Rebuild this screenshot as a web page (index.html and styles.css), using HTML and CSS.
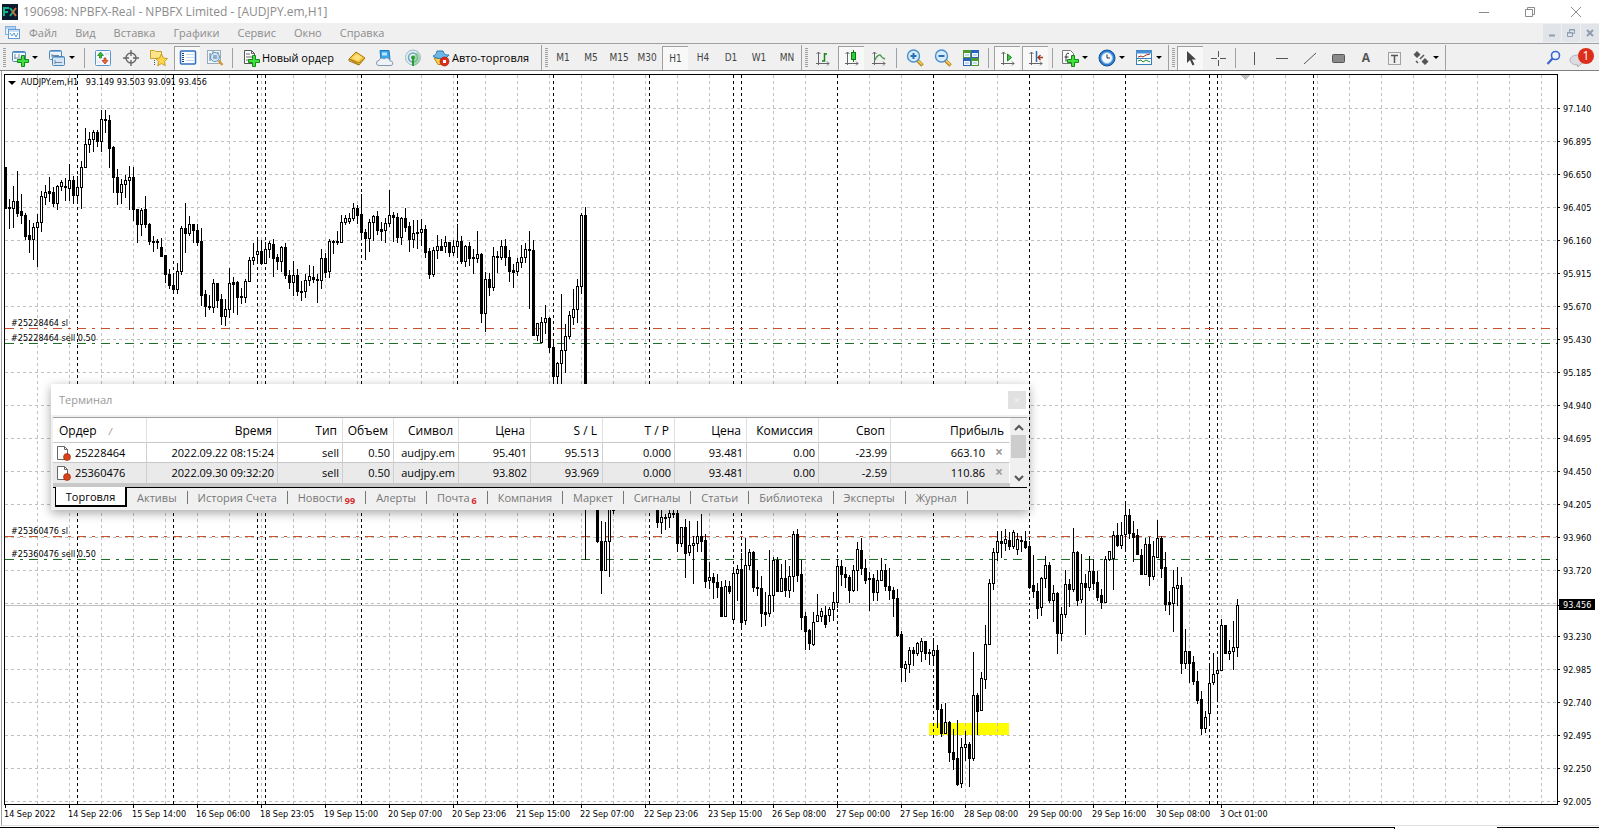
FILE: index.html
```html
<!DOCTYPE html>
<html lang="ru">
<head>
  <meta charset="UTF-8">
  <meta name="viewport" content="width=device-width, initial-scale=1.0">
  <title>190698: NPBFX-Real - NPBFX Limited - [AUDJPY.em,H1]</title>
  <link rel="stylesheet" href="styles.css">
</head>
<body>
  <header class="titlebar">
    <svg class="app-icon" width="16" height="16" viewBox="0 0 16 16"><rect width="16" height="16" fill="#0b1a2c"/><path d="M2 12V4h5M2 8h4" stroke="#12b48c" stroke-width="2" fill="none"/><path d="M8 4l3 4-3 4" stroke="#12b48c" stroke-width="2" fill="none"/><path d="M14 4l-3 4 3 4" stroke="#c8703c" stroke-width="2" fill="none"/></svg>
    <span class="title">190698: NPBFX-Real - NPBFX Limited - [AUDJPY.em,H1]</span>
    <div class="win-buttons">
      <button aria-label="Свернуть"><svg width="12" height="12"><path d="M1 6.500h10" stroke="#8a8a8a" fill="none"/></svg></button>
      <button aria-label="Развернуть"><svg width="12" height="12"><path d="M1.500 3.500h7v7h-7zM3.500 3V1.500h7v7H9" stroke="#8a8a8a" fill="none"/></svg></button>
      <button aria-label="Закрыть"><svg width="12" height="12"><path d="M1 1l10 10M11 1L1 11" stroke="#8a8a8a" fill="none"/></svg></button>
    </div>
  </header>

  <nav class="menubar">
    <svg class="menu-icon" width="15" height="15" viewBox="0 0 15 15"><rect x=".5" y="1.500" width="10" height="8" fill="#eef5fc" stroke="#7fb0e0"/><path d="M1 3h9" stroke="#7fb0e0"/><rect x="3.500" y="4.500" width="11" height="9" fill="#fff" stroke="#5b9bd8"/><path d="M4 6h10" stroke="#9cc4ea"/><path d="M5 8l2 3 2-3 2 4 2-4" stroke="#5b9bd8" fill="none"/></svg>
    <a href="#">Файл</a>
    <a href="#">Вид</a>
    <a href="#">Вставка</a>
    <a href="#">Графики</a>
    <a href="#">Сервис</a>
    <a href="#">Окно</a>
    <a href="#">Справка</a>
    <div class="mdi-buttons">
      <button aria-label="Свернуть окно"><svg width="10" height="10"><path d="M2 7.500h6" stroke="#8f9db0" stroke-width="2"/></svg></button>
      <button aria-label="Восстановить окно"><svg width="10" height="10"><path d="M1.500 4.500h5v4h-5zM3.500 4V1.500h5v4H7M1 5h6M3 2h6" stroke="#8f9db0" fill="none"/></svg></button>
      <button aria-label="Закрыть окно"><svg width="10" height="10"><path d="M2 2l6 6M8 2L2 8" stroke="#8f9db0" stroke-width="2"/></svg></button>
    </div>
  </nav>

  <div class="toolbar">
    <div class="tool-group">
      <button class="drop" aria-label="Новый график"><svg width="18" height="18" viewBox="0 0 18 18"><rect x="1.500" y="2.500" width="13" height="10" rx="1" fill="#f4f9fd" stroke="#4b86b8"/><path d="M1 3.500h14" stroke="#5c9ad0"/><path d="M4 5v5M3 9h7M8 5v3" stroke="#7a8fa5"/><path d="M10.500 6.500h3v4h4v3h-4v4h-3v-4h-4v-3h4z" fill="#3fe03f" stroke="#148a14"/></svg></button>
      <button class="drop" aria-label="Профили"><svg width="18" height="18" viewBox="0 0 18 18"><rect x="1.500" y="1.500" width="12" height="9" rx="1" fill="#eaf3fb" stroke="#4b86b8"/><rect x="4.500" y="7.500" width="12" height="9" rx="1" fill="#d5e7f6" stroke="#4b86b8"/><path d="M2 2.500h11M5 8.500h11" stroke="#7bb0dc"/><path d="M4 5v3M4 6.500h7M7 11v4M7 13.500h7" stroke="#6f88a0"/></svg></button>
      <span class="sep"></span>
      <button aria-label="Обзор рынка"><svg width="18" height="18" viewBox="0 0 18 18"><rect x="1.500" y="1.500" width="15" height="15" rx="1" fill="#f3f9fe" stroke="#5c96c6"/><path d="M4 5h3M11 5h4M3 13h3" stroke="#c4d9ea"/><path d="M6.500 3l3 3.500h-2V9h-2V6.500h-2z" fill="#35b535" stroke="#178217" stroke-width=".7"/><path d="M11 15l-3-3.500h2V9h2v2.500h2z" fill="#f26a3a" stroke="#b33512" stroke-width=".7"/></svg></button>
      <button aria-label="Окно данных"><svg width="18" height="18" viewBox="0 0 18 18"><circle cx="9" cy="9" r="5" fill="none" stroke="#666" stroke-width="1.400"/><path d="M9 1v6M9 11v6M1 9h6M11 9h6" stroke="#666" stroke-width="1.400"/></svg></button>
      <button aria-label="Навигатор"><svg width="18" height="18" viewBox="0 0 18 18"><path d="M.5 1.500h4l1 1h6v7h-11z" fill="#fbe48a" stroke="#c9a028"/><path d="M4.500 11v6" stroke="#555" stroke-dasharray="1 1"/><path d="M11.500 5l1.900 4 4.100.5-3 2.900.8 4.300-3.800-2.100-3.800 2.100.8-4.300-3-2.900 4.100-.5z" fill="#ffd84a" stroke="#b98a14" stroke-width=".8"/></svg></button>
      <button class="on" aria-label="Терминал"><svg width="18" height="18" viewBox="0 0 18 18"><rect x="1.500" y="2" width="15" height="13" rx="1" fill="#fff" stroke="#2f6fc0" stroke-width="1.500"/><path d="M4 4v10" stroke="#1d3f78" stroke-width="2" stroke-dasharray="1 1"/><path d="M7 5.500h8M7 8.500h8M7 11.500h8" stroke="#c9daef"/></svg></button>
      <button aria-label="Тестер стратегий"><svg width="18" height="18" viewBox="0 0 18 18"><rect x="1.500" y="1.500" width="13" height="13" fill="#f2f5f8" stroke="#9aa9b6"/><path d="M4 4v8M7 2v4M12 3v7" stroke="#5e7890"/><circle cx="9" cy="8" r="4.500" fill="#cfe6f8" fill-opacity=".8" stroke="#5c96c6"/><path d="M8 6v4M10 6v4" stroke="#4d7396"/><path d="M12.500 11.500l4 4.500" stroke="#d09a3a" stroke-width="2.500"/></svg></button>
      <span class="sep"></span>
      <button class="wide order"><svg width="18" height="18" viewBox="0 0 18 18"><path d="M2.500 1.500h7l3 3v10h-10z" fill="#fff" stroke="#555"/><path d="M9.500 1.500v3h3M4 5h4M4 8h6M4 11h4" stroke="#666" fill="none"/><path d="M10.500 6.500h3v4h4v3h-4v4h-3v-4h-4v-3h4z" fill="#3fe03f" stroke="#148a14"/></svg>Новый ордер</button>
      <button aria-label="MetaEditor"><svg width="18" height="18" viewBox="0 0 18 18"><path d="M1 10l7-7 9 6-6 7z" fill="#f3c63c" stroke="#a87814"/><path d="M1 10l10 4 6-5M1 10v2l10 4" fill="none" stroke="#a87814"/><path d="M4 9l5-4 5 3-4 4z" fill="#ffe07c"/></svg></button>
      <button aria-label="Облако"><svg width="18" height="18" viewBox="0 0 18 18"><path d="M4 1.500h9l1 9H5z" fill="#35a7ef" stroke="#1b78bd"/><path d="M6 3.500h5v3H6z" fill="#bfe3fb"/><path d="M3 16.500a2.500 2.500 0 010-5 3 3 0 015-1.500 3.500 3.500 0 016 2 2.300 2.300 0 011 4.500z" fill="#eef3f8" stroke="#8096b0"/></svg></button>
      <button aria-label="Сигналы"><svg width="18" height="18" viewBox="0 0 18 18"><circle cx="9" cy="8.500" r="7.500" fill="#e4eef2" stroke="#9db9c8"/><circle cx="9" cy="8.500" r="4.500" fill="none" stroke="#6ea9c0" stroke-width="1.500"/><path d="M9 8v9a8 8 0 004-14" fill="#7ac67a" fill-opacity=".6"/><path d="M9 9v8" stroke="#2f9a3c" stroke-width="2"/><circle cx="9" cy="8.500" r="2" fill="#2f9a3c"/></svg></button>
      <button class="wide auto"><svg width="18" height="18" viewBox="0 0 18 18"><path d="M2 9h13l-3 6.500H6z" fill="#f6cf4c" stroke="#b98a14"/><path d="M1 7c2-1 3-1 4-5h6c1 3 2 4 6 4-2 4-12 5-16 1z" fill="#6db7e8" stroke="#2c78ad"/><circle cx="12.500" cy="12.500" r="4.500" fill="#dd2c1c" stroke="#a31408" stroke-width=".6"/><rect x="11" y="11" width="3" height="3" fill="#fff"/></svg>Авто-торговля</button>
    </div>
    <div class="tool-group periods">
      <button>M1</button>
      <button>M5</button>
      <button>M15</button>
      <button>M30</button>
      <button class="on">H1</button>
      <button>H4</button>
      <button>D1</button>
      <button>W1</button>
      <button>MN</button>
    </div>
    <div class="tool-group">
      <button aria-label="Бары"><svg width="18" height="18" viewBox="0 0 18 18"><path class="axes" d="M4.500 3v13M2 14.500h13M2.500 5l2-2 2 2M13 12.500l2 2-2 2"/><path d="M8 12h2.500V4M10.500 5H13" stroke="#15851c" stroke-width="1.500" fill="none"/></svg></button>
      <button class="on" aria-label="Свечи"><svg width="18" height="18" viewBox="0 0 18 18"><path class="axes" d="M4.500 3v13M2 14.500h13M2.500 5l2-2 2 2M13 12.500l2 2-2 2"/><path d="M10.500 1v12" stroke="#0c7a12"/><rect x="8.500" y="3.500" width="4" height="7" fill="#2fce38" stroke="#0c7a12"/></svg></button>
      <button aria-label="Линия"><svg width="18" height="18" viewBox="0 0 18 18"><path class="axes" d="M4.500 3v13M2 14.500h13M2.500 5l2-2 2 2M13 12.500l2 2-2 2"/><path d="M5 11c2-5 5-6 6-4s2 2 4 3" stroke="#4c9a50" stroke-width="1.500" fill="none"/></svg></button>
      <span class="sep"></span>
      <button aria-label="Увеличить"><svg width="18" height="18" viewBox="0 0 18 18"><path d="M11 11l5.500 5.500" stroke="#b98a1c" stroke-width="3.500"/><path d="M11.500 11l4.500 4.500" stroke="#f2d264" stroke-width="1.500"/><circle cx="7.500" cy="7" r="6" fill="#d4ecfb" stroke="#4a8fcb" stroke-width="1.400"/><path d="M4.500 7h6M7.500 4v6" stroke="#2b6fb3" stroke-width="2"/></svg></button>
      <button aria-label="Уменьшить"><svg width="18" height="18" viewBox="0 0 18 18"><path d="M11 11l5.500 5.500" stroke="#b98a1c" stroke-width="3.500"/><path d="M11.500 11l4.500 4.500" stroke="#f2d264" stroke-width="1.500"/><circle cx="7.500" cy="7" r="6" fill="#d4ecfb" stroke="#4a8fcb" stroke-width="1.400"/><path d="M4.500 7h6" stroke="#2b6fb3" stroke-width="2"/></svg></button>
      <button aria-label="Плитка"><svg width="18" height="18" viewBox="0 0 18 18"><path d="M1 1h8v8H1zM9 9h8v8H9z" fill="#4d9a2f"/><path d="M9 1h8v8H9zM1 9h8v8H1z" fill="#2a62c0"/><path d="M2 4h6v4H2zM10 4h6v4h-6zM2 12h6v4H2zM10 12h6v4h-6z" fill="#f4f9ff"/><path d="M3 6h4M11 6h4M3 14h4M11 14h4" stroke="#9ab6d6"/></svg></button>
      <span class="sep"></span>
      <button class="on" aria-label="Автопрокрутка"><svg width="18" height="18" viewBox="0 0 18 18"><path class="axes" d="M4.500 3v13M2 14.500h13M2.500 5l2-2 2 2M13 12.500l2 2-2 2"/><path d="M8.500 5l4 3.500-4 3.500z" fill="#43c64b" stroke="#15851c"/></svg></button>
      <button class="on" aria-label="Сдвиг графика"><svg width="18" height="18" viewBox="0 0 18 18"><path class="axes" d="M4.500 3v13M2 14.500h13M2.500 5l2-2 2 2M13 12.500l2 2-2 2"/><path d="M9.500 2v11" stroke="#2b6fb3" stroke-width="1.500"/><path d="M11 8.500h5M13.500 6l-2.500 2.500 2.500 2.500" stroke="#a33a1c" stroke-width="1.400" fill="none"/></svg></button>
      <span class="sep"></span>
      <button class="drop" aria-label="Индикаторы"><svg width="18" height="18" viewBox="0 0 18 18"><path d="M1.500 1.500h8l3 3v10h-11z" fill="#fff" stroke="#777"/><path d="M8 4.500c-3-1-3 1-3 8M3.500 8h4" stroke="#333" fill="none"/><path d="M10.500 6.500h3v4h4v3h-4v4h-3v-4h-4v-3h4z" fill="#3fe03f" stroke="#148a14"/></svg></button>
      <button class="drop" aria-label="Периоды"><svg width="18" height="18" viewBox="0 0 18 18"><circle cx="9" cy="9" r="8" fill="#2b7fd0" stroke="#154f94"/><circle cx="9" cy="9" r="5.500" fill="#f3f9ff" stroke="#8bbbe6"/><path d="M9 5.500V9h3" stroke="#333" fill="none"/></svg></button>
      <button class="drop" aria-label="Шаблоны"><svg width="18" height="18" viewBox="0 0 18 18"><rect x="1.500" y="1.500" width="15" height="14" fill="#fff" stroke="#3a7cbc"/><path d="M1 3h16" stroke="#4a90d4" stroke-width="3"/><path d="M2 9.500h14" stroke="#3a7cbc"/><path d="M3 8l3-1 2 1 3-2 4-1" stroke="#a02c1c" fill="none"/><path d="M3 12l3-1 2 2 3-2 4 2" stroke="#1b8a26" fill="none"/></svg></button>
    </div>
    <div class="tool-group">
      <button class="on" aria-label="Курсор"><svg width="18" height="18" viewBox="0 0 18 18"><path d="M5 2v12l3-3 2.500 5.500 2-1L10 10.500h4z" fill="#444"/></svg></button>
      <button aria-label="Перекрестие"><svg width="18" height="18" viewBox="0 0 18 18"><path d="M9.500 2v6M9.500 11v6M2 9.500h6M11 9.500h6" stroke="#555"/></svg></button>
      <span class="sep"></span>
      <button aria-label="Вертикальная линия"><svg width="18" height="18"><path d="M9.500 3v13" stroke="#555"/></svg></button>
      <button aria-label="Горизонтальная линия"><svg width="18" height="18"><path d="M3 9.500h12" stroke="#555"/></svg></button>
      <button aria-label="Трендовая линия"><svg width="18" height="18"><path d="M3 15L15 4" stroke="#555"/></svg></button>
      <button aria-label="Прямоугольник"><svg width="18" height="18"><rect x="3.500" y="5.500" width="12" height="8" rx="1" fill="#8a8a8a" stroke="#555"/></svg></button>
      <button class="letter">A</button>
      <button aria-label="Метка"><svg width="18" height="18"><rect x="3.500" y="3.500" width="12" height="12" fill="none" stroke="#555" stroke-dasharray="1 1"/><path d="M6 6.500h7M9.500 6v8" stroke="#555" stroke-width="1.500" fill="none"/></svg></button>
      <button class="drop" aria-label="Стрелки"><svg width="18" height="18"><path d="M5 2l3.500 3.500L5 9 1.500 5.500zM13 9l3.500 3.500L13 16l-3.500-3.500z" fill="#555"/><path d="M4 12l2 2M8 10l4-4" stroke="#555" stroke-width="1.500"/></svg></button>
    </div>
    <div class="tool-right">
      <button aria-label="Поиск"><svg width="18" height="18"><circle cx="10.500" cy="6.500" r="4" fill="#eef4ff" stroke="#3a68d0" stroke-width="1.600"/><path d="M7.500 9.500L2.500 15" stroke="#3a68d0" stroke-width="2.200"/></svg></button>
      <button class="chat" aria-label="Сообщения"><svg width="22" height="20"><ellipse cx="8" cy="12" rx="7" ry="5" fill="#dcdce0" stroke="#b2b2b8"/><path d="M8 16l1 3 3-3" fill="#dcdce0" stroke="#b2b2b8"/></svg><span class="badge">1</span></button>
    </div>
  </div>

  <main class="chart-window">
    <div class="plot" id="plot">
      <svg id="chart"></svg>
      <div class="chart-head"><span class="arrow"></span>AUDJPY.em,H1&nbsp;&nbsp; 93.149 93.503 93.091 93.456</div>
    </div>
    <ul class="prices">
      <li>97.140</li><li>96.895</li><li>96.650</li><li>96.405</li><li>96.160</li><li>95.915</li>
      <li>95.670</li><li>95.430</li><li>95.185</li><li>94.940</li><li>94.695</li><li>94.450</li>
      <li>94.205</li><li>93.960</li><li>93.720</li><li class="current">93.456</li><li>93.230</li><li>92.985</li>
      <li>92.740</li><li>92.495</li><li>92.250</li><li>92.005</li>
    </ul>
    <ul class="times">
      <li>14 Sep 2022</li><li>14 Sep 22:06</li><li>15 Sep 14:00</li><li>16 Sep 06:00</li><li>18 Sep 23:05</li>
      <li>19 Sep 15:00</li><li>20 Sep 07:00</li><li>20 Sep 23:06</li><li>21 Sep 15:00</li><li>22 Sep 07:00</li>
      <li>22 Sep 23:06</li><li>23 Sep 15:00</li><li>26 Sep 08:00</li><li>27 Sep 00:00</li><li>27 Sep 16:00</li>
      <li>28 Sep 08:00</li><li>29 Sep 00:00</li><li>29 Sep 16:00</li><li>30 Sep 08:00</li><li>3 Oct 01:00</li>
    </ul>
  </main>
  <footer class="bottom-edge"><span></span><span></span></footer>

  <section class="terminal">
    <div class="terminal-title">Терминал<button aria-label="Закрыть терминал"></button></div>
    <div class="terminal-body">
      <table>
        <colgroup>
          <col class="c-order"><col class="c-time"><col class="c-type"><col class="c-vol"><col class="c-sym">
          <col class="c-num"><col class="c-num"><col class="c-num"><col class="c-num"><col class="c-num"><col class="c-num"><col class="c-profit">
        </colgroup>
        <thead>
          <tr><th>Ордер<i class="sort">/</i></th><th>Время</th><th>Тип</th><th>Объем</th><th>Символ</th><th>Цена</th><th>S / L</th><th>T / P</th><th>Цена</th><th>Комиссия</th><th>Своп</th><th>Прибыль</th></tr>
        </thead>
        <tbody>
          <tr>
            <td><svg width="14" height="16" viewBox="0 0 14 16"><path d="M.5 1.500h7l3 3v10H.5z" fill="#fff" stroke="#666"/><path d="M7.500 1.500v3h3" fill="none" stroke="#666"/><circle cx="10" cy="12" r="3.500" fill="#d8431c" stroke="#8f2408" stroke-width=".6"/></svg>25228464</td>
            <td>2022.09.22 08:15:24</td><td>sell</td><td>0.50</td><td>audjpy.em</td><td>95.401</td><td>95.513</td><td>0.000</td><td>93.481</td><td>0.00</td><td>-23.99</td><td>663.10<button class="x" aria-label="Закрыть ордер"></button></td>
          </tr>
          <tr>
            <td><svg width="14" height="16" viewBox="0 0 14 16"><path d="M.5 1.500h7l3 3v10H.5z" fill="#fff" stroke="#666"/><path d="M7.500 1.500v3h3" fill="none" stroke="#666"/><circle cx="10" cy="12" r="3.500" fill="#d8431c" stroke="#8f2408" stroke-width=".6"/></svg>25360476</td>
            <td>2022.09.30 09:32:20</td><td>sell</td><td>0.50</td><td>audjpy.em</td><td>93.802</td><td>93.969</td><td>0.000</td><td>93.481</td><td>0.00</td><td>-2.59</td><td>110.86<button class="x" aria-label="Закрыть ордер"></button></td>
          </tr>
        </tbody>
      </table>
      <div class="scroll">
        <svg width="10" height="8"><path d="M1 6l4-4 4 4" stroke="#555" stroke-width="2" fill="none"/></svg>
        <span class="thumb"></span>
        <svg width="10" height="8"><path d="M1 2l4 4 4-4" stroke="#555" stroke-width="2" fill="none"/></svg>
      </div>
    </div>
    <div class="tabs">
      <button class="active">Торговля</button>
      <button>Активы</button>
      <button>История Счета</button>
      <button>Новости<sub>99</sub></button>
      <button>Алерты</button>
      <button>Почта<sub>6</sub></button>
      <button>Компания</button>
      <button>Маркет</button>
      <button>Сигналы</button>
      <button>Статьи</button>
      <button>Библиотека</button>
      <button>Эксперты</button>
      <button>Журнал</button>
    </div>
  </section>

  <script src="chart.js"></script>
</body>
</html>
```
FILE: styles.css
```css
* {
  box-sizing: border-box;
}
body {
  margin: 0;
  height: 100vh;
  display: flex;
  flex-direction: column;
  overflow: hidden;
  background: #fff;
  color: #000;
  font-family: "Open Sans", "Noto Sans", sans-serif;
  font-size: 11px;
}
button {
  font: inherit;
  color: inherit;
  border: 0;
  padding: 0;
  margin: 0;
  background: none;
}
a {
  color: inherit;
  text-decoration: none;
}
ul {
  list-style: none;
  margin: 0;
  padding: 0;
}
svg {
  display: block;
  flex: none;
}

/* title and menu */
.titlebar {
  display: flex;
  align-items: center;
  height: 23px;
  padding-left: 2px;
  color: #8c8c8c;
  font-size: 12px;
}
.title {
  margin-left: 5px;
}
.win-buttons {
  display: flex;
  margin-left: auto;
}
.win-buttons button {
  width: 46px;
  height: 22px;
  display: flex;
  align-items: center;
  justify-content: center;
}
.menubar {
  display: flex;
  align-items: center;
  height: 20px;
  padding-bottom: 1px;
  background: #f0f0f0;
  color: #8c8c8c;
}
.menu-icon {
  margin-left: 5px;
}
.menubar a {
  padding: 0 9px;
}
.mdi-buttons {
  display: flex;
  gap: 1px;
  margin-left: auto;
}
.mdi-buttons button {
  width: 18px;
  height: 18px;
  display: flex;
  align-items: center;
  justify-content: center;
  background: #e1e4e8;
}

/* toolbar */
.toolbar {
  display: flex;
  height: 28px;
  padding-top: 1px;
  background: #f0f0f0;
  border-top: 1px solid #a0a0a0;
  border-bottom: 1px solid #808080;
}
.tool-group {
  display: flex;
  align-items: center;
  padding-left: 3px;
  border-right: 1px solid #a0a0a0;
}
.tool-group::before {
  content: "";
  width: 3px;
  height: 20px;
  margin-right: 1px;
  background: repeating-linear-gradient(#a0a0a0 0 1px, #f0f0f0 1px 2px);
}
.tool-group button {
  width: 26px;
  height: 24px;
  margin: 0 1px;
  display: flex;
  align-items: center;
  justify-content: center;
}
.tool-group .on {
  background: #f8f8f8;
  border-top: 1px solid #a0a0a0;
  border-left: 1px solid #a0a0a0;
}
.tool-group .drop {
  width: 36px;
  margin: 0 1px 0 0;
  padding-left: 4px;
  justify-content: flex-start;
  gap: 3px;
}
.drop::after {
  content: "";
  border: 3px solid transparent;
  border-top-color: #000;
  border-bottom: 0;
}
.tool-group .wide {
  justify-content: flex-start;
  padding-left: 4px;
  gap: 2px;
  white-space: nowrap;
}
.tool-group .order {
  width: 104px;
}
.tool-group .auto {
  width: 112px;
}
.sep {
  width: 2px;
  height: 20px;
  margin: 0 3px;
  border-left: 1px solid #a0a0a0;
}
.periods {
  color: #444;
  font-size: 10px;
  font-family: "DejaVu Sans Condensed", "Open Sans", sans-serif;
}
.tool-group .letter {
  font-size: 12px;
  font-weight: bold;
  color: #555;
}
.axes {
  stroke: #666;
  fill: none;
}
.tool-right {
  display: flex;
  align-items: center;
  margin-left: auto;
  gap: 6px;
  padding-right: 8px;
}
.chat {
  position: relative;
}
.badge {
  position: absolute;
  right: -3px;
  top: 0;
  width: 16px;
  height: 16px;
  border-radius: 8px;
  background: #dd2e1c;
  color: #fff;
  font-size: 12px;
  line-height: 16px;
  text-align: center;
}

/* chart */
.chart-window {
  flex: 1;
  min-height: 0;
  display: grid;
  grid-template-columns: 1fr 41px;
  grid-template-rows: minmax(0, 1fr) 20px;
  margin-left: 1px;
  padding: 3px 0 0 2px;
  border-left: 1px solid #a0a0a0;
  border-bottom: 1px solid #e0e0e0;
  font-family: "DejaVu Sans Condensed", "Open Sans", sans-serif;
  font-size: 9px;
}
.plot {
  position: relative;
  min-width: 0;
  min-height: 0;
  border: 1px solid #000;
}
.plot svg {
  width: 100%;
  height: 100%;
  overflow: hidden;
  position: absolute;
}
.chart-head {
  position: absolute;
  left: 3px;
  top: 0;
  display: flex;
  align-items: center;
  line-height: 15px;
}
.arrow {
  border: 4px solid transparent;
  border-top-color: #000;
  border-bottom: 0;
  margin-right: 5px;
}
.prices {
  min-height: 0;
  padding-top: 18px;
}
.prices li {
  display: flex;
  align-items: center;
  gap: 3px;
  height: 33px;
}
.prices li::before {
  content: "";
  width: 2px;
  border-top: 1px solid #000;
}
.prices .current {
  padding-top: 3px;
  color: #fff;
  background: linear-gradient(#000, #000) 1px 12px / 36px 11px no-repeat;
}
.times {
  grid-column: 1 / 3;
  display: flex;
}
.times li {
  width: 64px;
  white-space: nowrap;
  line-height: 13px;
}
.times li::before {
  content: "";
  display: block;
  height: 3px;
  margin-left: 1px;
  border-left: 1px solid #000;
}
.bottom-edge {
  display: flex;
  justify-content: space-between;
  height: 3px;
  padding-top: 1px;
}
.bottom-edge span {
  border-top: 1px solid #000;
  width: 102px;
}
.bottom-edge span:first-child {
  width: calc(100% - 204px);
  border-right: 1px solid #000;
}

/* floating terminal window */
.terminal {
  position: absolute;
  left: 51px;
  top: 384px;
  width: 978px;
  background: #f0f0f0;
  padding: 0 2px 2px;
  box-shadow: 0 3px 10px rgba(0, 0, 0, 0.35);
}
.terminal-title {
  display: flex;
  align-items: center;
  justify-content: space-between;
  height: 31px;
  margin: 0 -2px 2px;
  padding: 0 3px 0 8px;
  background: #fff;
  color: #999;
}
.terminal-title button {
  width: 18px;
  height: 18px;
  background: #e1e1e1;
  color: #eee;
}
.terminal-title button::before,
.x::before {
  content: "×";
  font-weight: bold;
}
.terminal-body {
  display: flex;
  border-top: 1px solid #a0a0a0;
}
table {
  border-collapse: separate;
  border-spacing: 0;
  table-layout: fixed;
  width: 957px;
  border-bottom: 4px solid #c8c8c8;
  background: #fff;
}
.c-order { width: 94px; }
.c-time { width: 131px; }
.c-type { width: 65px; }
.c-vol { width: 51px; }
.c-sym { width: 65px; }
.c-num { width: 72px; }
.c-profit { width: 119px; }
th {
  height: 25px;
  padding: 0 5px 0 0;
  font-size: 12px;
  font-weight: normal;
  text-align: right;
  border-right: 1px solid #e0e0e0;
  border-bottom: 1px solid #c8c8c8;
}
td {
  height: 20px;
  padding: 0 3px 0 0;
  line-height: 16px;
  text-align: right;
  white-space: nowrap;
  border-right: 1px solid #d0d0d0;
  border-bottom: 1px solid #c8c8c8;
}
tbody tr:last-child td {
  background: #eaeaea;
  border-bottom: 0;
}
th:first-child {
  text-align: left;
  padding-left: 6px;
}
td:first-child {
  text-align: left;
  padding-left: 4px;
}
td:first-child svg {
  float: left;
  margin-right: 4px;
}
th:last-child,
td:last-child {
  border-right-color: #fff;
}
.sort {
  margin-left: 12px;
  color: #888;
  font-size: 9px;
}
.x {
  width: 14px;
  margin-left: 7px;
  color: #999;
  font-size: 14px;
  line-height: 14px;
}
.scroll {
  width: 17px;
  padding: 6px 0 5px;
  display: flex;
  flex-direction: column;
  align-items: center;
}
.thumb {
  width: 15px;
  height: 23px;
  margin: 3px 0 auto;
  background: #cdcdcd;
}
.tabs {
  display: flex;
  height: 21px;
  border-top: 1px solid #000;
  padding-left: 2px;
  color: #777;
}
.tabs button {
  display: flex;
  align-items: center;
  height: 19px;
  white-space: nowrap;
}
.tabs button::after {
  content: "";
  height: 13px;
  margin: 0 10px;
  border-left: 1px solid #777;
}
.tabs .active {
  width: 72px;
  height: 20px;
  margin: -1px 10px 0 0;
  justify-content: center;
  border: 1px solid #000;
  border-top: 0;
  border-right-width: 2px;
  border-bottom-width: 2px;
  background: #fff;
  color: #000;
}
.tabs .active::after {
  display: none;
}
.tabs sub {
  margin: 6px 0 0 2px;
  color: #d8282c;
  font-size: 9px;
  font-weight: bold;
}
```
FILE: chart.js
```js
// high, body top, body bottom, low, filled (1) or hollow (0)
const candles = `
167 167 208 208 1|199 207 208 228 1|186 201 208 227 0|171 201 213 216 1|194 211 215 223 1|213 215 236 239 1|220 235 239 252 1|223 227 239 259 0|214 222 227 266 0|191 196 222 231 0
185 192 197 204 0|177 191 193 201 1|187 192 203 206 1|185 186 203 209 0|180 182 186 190 0|178 186 187 200 1|164 180 188 200 0|176 180 195 203 1|176 187 195 203 0|161 167 187 208 0
128 144 167 167 0|132 139 144 152 0|130 132 139 151 0|130 132 141 146 1|110 119 141 151 0|110 119 120 132 1|115 120 148 167 1|146 147 177 192 1|169 177 192 204 1|179 184 192 203 0
175 180 184 197 0|166 177 180 209 0|167 177 209 220 1|209 209 224 242 1|208 210 224 235 0|196 209 224 227 1|223 224 241 244 1|236 241 242 251 1|239 241 242 248 1|238 247 256 256 1
255 255 274 282 1|269 274 285 288 1|276 285 289 293 1|263 271 289 293 0|226 228 271 274 0|203 228 233 252 1|216 224 233 235 0|224 224 230 242 1|224 230 242 245 1|228 241 295 305 1
290 294 306 316 1|295 306 307 309 1|279 283 307 312 0|283 283 300 307 1|294 299 316 324 1|299 309 316 325 0|268 283 309 317 0|277 282 284 312 1|281 282 297 314 1|288 296 297 303 1
279 281 297 302 0|257 260 281 281 0|243 257 260 264 0|240 251 254 263 0|240 251 263 264 1|242 249 263 263 0|241 243 249 257 0|239 244 258 276 1|254 257 261 269 1|246 247 261 271 0
243 247 275 278 1|270 275 282 288 1|261 275 282 295 0|269 275 291 295 1|281 291 292 300 1|274 280 291 297 0|265 276 280 285 0|266 277 279 282 1|274 279 280 302 1|249 258 280 288 0
253 258 272 277 1|239 241 271 277 0|240 241 242 253 1|231 241 242 244 1|215 222 242 242 0|215 218 222 224 0|213 218 221 223 0|203 208 218 220 0|205 208 215 223 1|194 214 232 236 1
229 232 238 259 1|219 222 238 251 0|215 216 222 240 0|211 216 230 234 1|222 229 231 240 1|218 223 230 242 0|190 215 223 226 0|212 215 217 241 1|213 217 237 242 1|217 218 237 244 0
208 218 227 231 1|222 226 239 251 1|220 233 239 247 0|220 232 233 248 1|219 229 232 245 0|225 229 252 257 1|248 251 274 278 1|247 250 274 276 0|235 246 250 258 0|239 246 250 250 1
236 242 246 252 0|242 242 252 256 1|240 246 252 255 0|224 241 246 257 0|236 241 261 263 1|245 246 261 266 0|242 246 258 265 1|249 257 258 273 1|231 254 258 262 0|253 254 313 322 1
272 279 313 331 0|273 279 287 295 1|247 256 287 290 0|251 256 257 272 1|240 246 257 259 0|239 246 257 265 1|250 257 271 281 1|264 270 272 287 1|258 262 271 275 0|245 257 262 267 0
243 249 257 262 0|231 249 250 308 1|240 250 335 335 1|323 323 335 340 0|317 322 342 342 0|305 318 322 333 0|317 318 347 352 1|342 347 376 400 1|362 363 376 400 0|294 350 363 400 0
324 336 350 372 0|311 315 336 338 0|289 309 317 324 0|279 286 309 322 0|213 215 286 293 0|207 215 480 559 1|440 450 480 490 0|440 450 470 490 1|470 490 541 542 1|521 541 570 593 1
522 541 570 570 0|480 490 541 576 0|470 480 510 513 1|470 474 480 484 0|462 466 474 480 0|458 462 466 472 0|450 458 462 470 0|450 458 464 470 1|456 464 468 474 1|460 468 474 480 1
466 474 478 484 1|470 478 484 490 1|474 484 490 496 1|480 490 522 527 1|500 517 522 533 0|514 517 518 529 1|505 513 517 527 0|503 513 514 517 1|508 513 543 551 1|527 527 543 546 0
519 527 553 577 1|521 545 552 555 0|536 543 545 583 0|521 536 543 551 0|514 536 541 551 1|534 540 581 587 1|562 577 580 588 0|573 577 582 598 1|574 582 587 597 1|581 587 616 616 1
580 586 616 616 0|581 586 591 593 1|567 573 619 622 0|565 569 573 600 0|553 569 622 629 1|538 565 620 624 0|549 552 565 569 0|551 552 587 591 1|570 587 588 595 1|576 588 613 626 1
592 612 614 625 1|550 595 613 616 0|557 560 595 611 0|557 560 591 591 1|564 578 591 591 0|560 578 590 596 1|566 576 590 597 0|531 534 576 591 0|529 534 575 581 1|560 574 617 629 1
612 616 631 649 1|629 630 643 649 1|612 622 644 645 0|594 615 621 621 0|608 611 616 621 0|606 615 624 627 1|607 609 615 621 0|592 602 609 620 0|559 566 602 607 0|560 566 574 585 1
567 574 577 587 1|575 577 590 602 1|565 570 590 591 0|542 549 570 590 0|538 550 568 574 1|559 568 580 583 1|572 578 579 610 1|574 578 592 600 1|570 580 592 600 0|558 570 580 580 0
564 570 586 590 1|568 586 590 599 1|587 590 598 616 1|589 598 635 636 1|631 634 667 681 1|661 664 668 681 0|647 650 664 672 0|647 650 653 665 1|642 643 653 655 0|638 641 651 661 0
641 641 653 659 1|649 652 653 664 1|638 650 655 664 0|645 650 709 727 1|704 709 733 736 1|703 722 733 733 0|721 722 752 761 1|729 752 759 769 1|720 758 784 785 1|738 747 783 787 0
731 744 747 760 0|742 744 758 786 1|652 695 758 760 0|693 695 711 734 1|672 678 710 710 0|625 644 679 688 0|579 583 644 644 0|548 552 583 589 0|531 541 552 560 0|531 541 543 557 1
529 539 543 550 0|532 540 546 549 1|530 532 546 548 0|533 539 549 554 0|536 540 541 551 1|531 541 547 548 1|541 546 587 588 1|555 585 591 597 1|583 591 608 618 1|577 578 607 615 0
556 565 578 587 0|562 565 600 602 1|585 593 600 621 0|592 593 633 653 1|607 614 633 640 0|570 584 614 617 0|579 584 589 606 1|528 552 589 591 0|551 552 600 605 1|554 583 599 602 0
574 583 587 634 1|556 571 587 590 0|559 571 583 589 1|571 582 597 600 1|589 595 602 608 1|556 559 602 602 0|551 551 559 560 0|531 535 558 589 0|523 535 545 546 1|522 535 545 548 0
504 515 534 551 0|509 515 533 538 1|521 533 537 561 1|529 535 554 554 1|549 555 574 574 1|538 544 574 574 0|537 544 576 585 1|541 556 576 579 0|520 538 557 557 0|536 538 568 577 1
552 567 604 610 1|591 602 604 614 1|570 587 603 631 0|567 585 588 605 0|577 585 663 673 1|629 651 663 668 0|651 651 663 682 1|656 662 681 684 1|671 681 700 703 1|691 699 728 734 1
711 717 728 732 0|665 683 713 725 0|653 674 682 684 0|660 670 673 701 0|619 625 670 670 0|625 625 653 653 1|640 651 653 659 0|621 647 651 669 0|599 605 647 656 0
`.trim().split(/[|\n]/).map(row => row.split(' ').map(Number));

const TOP = 75;
const STEP = 4;
const days = [18, 42, 63, 65, 89, 113, 137, 161, 182, 184, 208, 232, 256, 280, 301, 303, 327];
const orders = [
  { y: 328, text: '#25228464 sl', color: '#c8502c' },
  { y: 343, text: '#25228464 sell 0.50', color: '#1e6e28' },
  { y: 536, text: '#25360476 sl', color: '#c8502c' },
  { y: 559, text: '#25360476 sell 0.50', color: '#1e6e28' }
];

function line(x1, y1, x2, y2, color, dash) {
  return `<line x1="${x1}" y1="${y1}" x2="${x2}" y2="${y2}" stroke="${color}" stroke-dasharray="${dash || 'none'}"/>`;
}

function draw() {
  const plot = document.getElementById('plot');
  const w = plot.clientWidth;
  const h = plot.clientHeight;
  let out = '<rect x="924" y="648" width="80" height="12" fill="#ffff00"/>';

  for (let x = 32.5; x < w; x += 32) out += line(x, 0, x, h, '#c0c0c0', '3 3');
  for (let y = 33.5; y < h; y += 33) out += line(0, y, w, y, '#c0c0c0', '3 3');
  days.forEach(d => out += line(d * STEP + 0.5, 0, d * STEP + 0.5, h, '#000', '3 3'));
  out += line(0, 605.5 - TOP, w, 605.5 - TOP, '#c0c0c0');

  orders.forEach(o => {
    const y = o.y - TOP + 0.5;
    out += line(0, y, w, y, o.color, '9 6 3 6');
    out += `<text x="6" y="${o.y - TOP - 2}">${o.text}</text>`;
  });

  candles.forEach(([high, top, bottom, low, filled], i) => {
    const x = i * STEP;
    out += `<rect x="${x}" y="${high - TOP}" width="1" height="${low - high + 1}"/>`;
    out += `<rect x="${x - 1}" y="${top - TOP}" width="3" height="${bottom - top + 1}"/>`;
    if (!filled && bottom - top > 1) {
      out += `<rect x="${x}" y="${top - TOP + 1}" width="1" height="${bottom - top - 1}" fill="#fff"/>`;
    }
  });

  // chart shift mark
  out += '<path d="M1235 0h10l-5 5z" fill="#c0c0c0"/>';

  const svg = document.getElementById('chart');
  svg.setAttribute('shape-rendering', 'crispEdges');
  svg.innerHTML = out;
}

window.addEventListener('resize', draw);
draw();
```
